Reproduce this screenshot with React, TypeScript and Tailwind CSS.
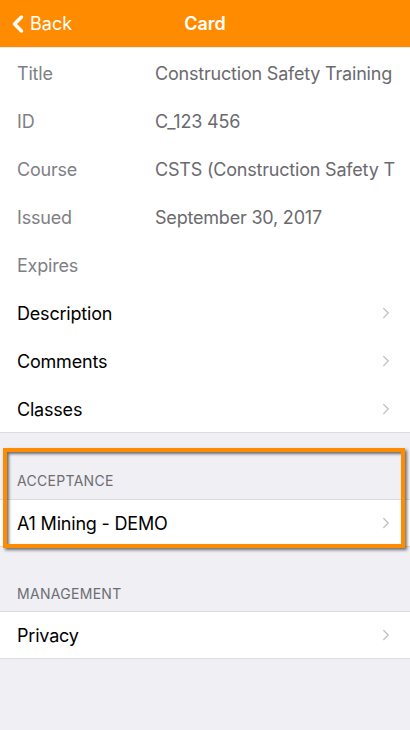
import React from 'react';
import { ChevronLeft, ChevronRight } from 'lucide-react';

const font = { fontFamily: 'Inter, "Noto Sans", sans-serif' };

type Info = { label: string; value: string };

const info: Info[] = [
  { label: 'Title', value: 'Construction Safety Training' },
  { label: 'ID', value: 'C_123 456' },
  { label: 'Course', value: 'CSTS (Construction Safety T' },
  { label: 'Issued', value: 'September 30, 2017' },
  { label: 'Expires', value: '' },
];

function LinkRow({ text, tall = true }: { text: string; tall?: boolean }) {
  return (
    <div className={(tall ? 'h-[48px] pt-[2px]' : 'h-[46px]') + ' flex items-center pl-[17px] pr-[15px] bg-white'}>
      <span className="flex-1 text-[18px] text-black tracking-[-0.2px]">{text}</span>
      <ChevronRight className="w-[18px] h-[18px] text-[#c4c4c9]" strokeWidth={2} />
    </div>
  );
}

export default function App() {
  return (
    <div className="w-[410px] h-[730px] bg-[#efeff4] overflow-hidden relative" style={font}>
      {/* Nav bar */}
      <div className="h-[48px] bg-[#ff8c00] border-b border-[#e9e9ec] relative flex items-center justify-center">
        <div className="absolute left-[4px] top-0 h-full flex items-center text-white">
          <ChevronLeft className="w-[28px] h-[28px]" strokeWidth={3} />
          <span className="text-[18px] -ml-[2px]">Back</span>
        </div>
        <span className="text-white text-[18px] font-semibold">Card</span>
      </div>

      {/* Info rows */}
      <div className="bg-white border-b border-[#dcdce0]">
        {info.map((r) => (
          <div key={r.label} className="h-[48px] pt-[2px] flex items-center pl-[17px]">
            <span className="w-[138px] shrink-0 text-[18px] text-[#808084] tracking-[-0.2px]">{r.label}</span>
            <span className="text-[18px] text-[#6a6a6e] whitespace-nowrap tracking-[-0.2px]">{r.value}</span>
          </div>
        ))}
        <LinkRow text="Description" />
        <LinkRow text="Comments" />
        <LinkRow text="Classes" />
      </div>

      {/* Acceptance section */}
      <div className="h-[66px] flex items-end pl-[17px] pb-[10px]">
        <span className="text-[14px] leading-4 text-[#6d6d72] tracking-[0.3px]">ACCEPTANCE</span>
      </div>
      <div className="border-y border-[#dcdce0]">
        <LinkRow text="A1 Mining - DEMO" tall={false} />
      </div>

      {/* Management section */}
      <div className="h-[64px] flex items-end pl-[17px] pb-[9px]">
        <span className="text-[14px] leading-4 text-[#6d6d72] tracking-[0.3px]">MANAGEMENT</span>
      </div>
      <div className="border-y border-[#dcdce0]">
        <LinkRow text="Privacy" tall={false} />
      </div>

      {/* Highlight box */}
      <div className="absolute left-[3px] top-[448px] w-[402px] h-[100px] border-[4px] border-[#ff8c00] shadow-[2px_2px_3px_rgba(0,0,0,0.55),inset_2px_2px_3px_rgba(0,0,0,0.55)] pointer-events-none" />
    </div>
  );
}
